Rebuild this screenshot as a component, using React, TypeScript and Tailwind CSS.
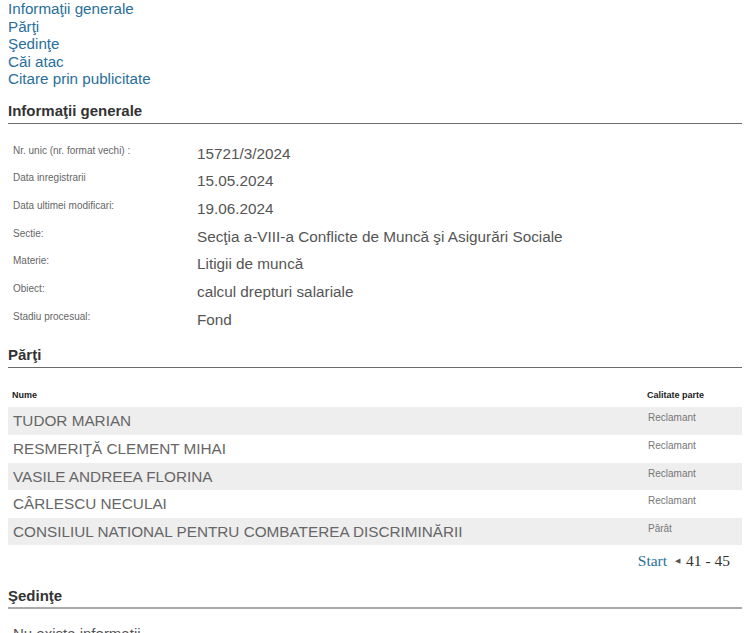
import React from "react";

const info: [string, string][] = [
  ["Nr. unic (nr. format vechi) :", "15721/3/2024"],
  ["Data inregistrarii", "15.05.2024"],
  ["Data ultimei modificari:", "19.06.2024"],
  ["Sectie:", "Secţia a-VIII-a Conflicte de Muncă şi Asigurări Sociale"],
  ["Materie:", "Litigii de muncă"],
  ["Obiect:", "calcul drepturi salariale"],
  ["Stadiu procesual:", "Fond"],
];

const parti: [string, string][] = [
  ["TUDOR MARIAN", "Reclamant"],
  ["RESMERIŢĂ CLEMENT MIHAI", "Reclamant"],
  ["VASILE ANDREEA FLORINA", "Reclamant"],
  ["CÂRLESCU NECULAI", "Reclamant"],
  ["CONSILIUL NATIONAL PENTRU COMBATEREA DISCRIMINĂRII", "Pârât"],
];

export default function App() {
  return (
    <div
      className="w-[750px] h-[633px] overflow-hidden bg-white px-2"
      style={{ fontFamily: '"Liberation Sans", Arial, sans-serif' }}
    >
      <nav className="flex flex-col text-[15.2px] leading-[17.5px] text-[#2a6f9b]">
        <a>Informaţii generale</a>
        <a>Părţi</a>
        <a>Şedinţe</a>
        <a>Căi atac</a>
        <a>Citare prin publicitate</a>
      </nav>

      <h2 className="mt-[14px] border-b border-[#6b6b6b] pb-[3px] text-[15px] font-bold leading-[18px] text-[#333]">
        Informaţii generale
      </h2>

      <div className="mt-[15px] flex flex-col">
        {info.map(([label, value]) => (
          <div key={label} className="flex h-[27.7px] items-start">
            <div className="w-[189px] pl-[5px] pt-[6px] text-[10px] leading-[12px] text-[#666]">
              {label}
            </div>
            <div className="text-[15.3px] leading-[29px] text-[#555]">{value}</div>
          </div>
        ))}
      </div>

      <h2 className="mt-[14px] border-b border-[#6b6b6b] pb-[3px] text-[15px] font-bold leading-[18px] text-[#333]">
        Părţi
      </h2>

      <div className="mt-[15px] flex h-[24px] items-center text-[9px] font-bold text-[#222]">
        <div className="flex-1 pl-[4px]">Nume</div>
        <div className="w-[95px]">Calitate parte</div>
      </div>
      <div className="flex flex-col">
        {parti.map(([name, role], i) => (
          <div
            key={name}
            className={`flex h-[27.6px] items-start ${i % 2 === 0 ? "bg-[#eeeeee]" : "bg-white"}`}
          >
            <div className="flex-1 pl-[5px] text-[15.3px] leading-[28px] text-[#666]">{name}</div>
            <div className="w-[94px] pt-[5px] text-[10px] leading-[12px] text-[#777]">{role}</div>
          </div>
        ))}
      </div>

      <div
        className="mt-[7px] flex items-center justify-end pr-[12px] text-[15.5px] leading-[18px]"
        style={{ fontFamily: '"Liberation Serif", "Times New Roman", serif' }}
      >
        <span className="text-[#2a6f9b]">Start</span>
        <span className="ml-[8px] mr-[6px] text-[7px] text-[#555]">◀</span>
        <span className="text-[#333]">41 - 45</span>
      </div>

      <h2 className="mt-[17px] border-b-2 border-[#aaaaaa] pb-[2px] text-[15px] font-bold leading-[18px] text-[#333]">
        Şedinţe
      </h2>

      <div className="mt-[16px] pl-[5px] text-[15px] leading-[18px] text-[#555]">
        Nu exista informatii.
      </div>
    </div>
  );
}
